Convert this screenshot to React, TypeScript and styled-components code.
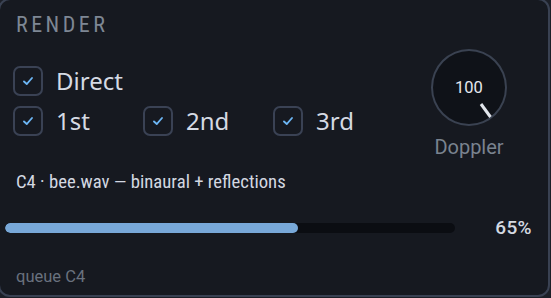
import React from "react";
import styled, { createGlobalStyle } from "styled-components";

const GlobalStyle = createGlobalStyle`
  html, body {
    margin: 0;
    padding: 0;
    background: #1c1f27;
  }
  body {
    overflow: hidden;
  }
`;

const Panel = styled.section`
  box-sizing: border-box;
  width: 552px;
  height: 299px;
  margin: -2px 0 0 -2px;
  padding: 14px 16px 0 5px;
  display: flex;
  flex-direction: column;
  border: 2px solid #394152;
  border-radius: 12px;
  background: #161920;
  font-family: Roboto, "Liberation Sans", sans-serif;
  overflow: hidden;
`;

const Title = styled.h2`
  margin: 0 0 0 11px;
  font-size: 22px;
  line-height: 22px;
  font-weight: 400;
  font-stretch: condensed;
  letter-spacing: 3.5px;
  color: #7e8794;
`;

const TopRow = styled.div`
  display: flex;
  justify-content: space-between;
  align-items: flex-start;
  margin-top: 13px;
  padding-right: 25px;
`;

const Options = styled.div`
  display: grid;
  grid-template-columns: repeat(3, 130px);
  row-gap: 10px;
  margin: 17px 0 0 8px;
`;

const Option = styled.label<{ $wide?: boolean }>`
  display: flex;
  align-items: center;
  gap: 13px;
  grid-column: ${(p) => (p.$wide ? "1 / -1" : "auto")};
`;

const Box = styled.span`
  box-sizing: border-box;
  width: 30px;
  height: 30px;
  display: flex;
  align-items: center;
  justify-content: center;
  border: 2px solid #3a4254;
  border-radius: 7px;
  color: #6cb6f4;
`;

const OptionText = styled.span`
  font-family: "Noto Sans", "Open Sans", sans-serif;
  font-size: 24px;
  line-height: 30px;
  color: #d5dae3;
`;

const KnobCol = styled.div`
  display: flex;
  flex-direction: column;
  align-items: center;
  width: 76px;
`;

const Knob = styled.div`
  position: relative;
  box-sizing: border-box;
  width: 76px;
  height: 77px;
  display: flex;
  align-items: center;
  justify-content: center;
  border: 2px solid #3a4251;
  border-radius: 50%;
  background: #0f1218;
`;

const KnobValue = styled.span`
  font-size: 16.5px;
  line-height: 20px;
  color: #e4e8ee;
`;

const Needle = styled.svg`
  position: absolute;
  inset: -2px;
  width: 76px;
  height: 77px;
`;

const KnobLabel = styled.span`
  margin-top: 9px;
  font-size: 20px;
  line-height: 24px;
  color: #7a838f;
`;

const Status = styled.div`
  margin: 12px 0 0 11px;
  font-size: 18.7px;
  line-height: 22px;
  font-stretch: condensed;
  color: #d3d8e1;
`;

const ProgressRow = styled.div`
  display: flex;
  align-items: center;
  height: 22px;
  margin-top: 24px;
`;

const Track = styled.div`
  width: 450px;
  height: 10px;
  border-radius: 5px;
  background: #0b0d12;
  overflow: hidden;
`;

const Fill = styled.div`
  height: 100%;
  border-radius: 5px;
  background: #78a8d8;
`;

const Percent = styled.span`
  flex: 1;
  text-align: right;
  font-size: 19px;
  line-height: 22px;
  font-weight: 500;
  letter-spacing: 0.4px;
  color: #d4d9e1;
`;

const Queue = styled.div`
  margin: 28px 0 0 11px;
  font-size: 16.5px;
  line-height: 20px;
  color: #69717e;
`;

const Check = () => (
  <svg width="12" height="12" viewBox="0 0 12 12">
    <polyline
      points="2,6.5 4.8,9 10,3"
      fill="none"
      stroke="currentColor"
      strokeWidth="1.9"
      strokeLinecap="round"
      strokeLinejoin="round"
    />
  </svg>
);

const CheckOption = ({ label, wide }: { label: string; wide?: boolean }) => (
  <Option $wide={wide}>
    <Box>
      <Check />
    </Box>
    <OptionText>{label}</OptionText>
  </Option>
);

const progress = 65;

const App = () => {
  return (
    <>
      <GlobalStyle />
      <Panel>
        <Title>RENDER</Title>
        <TopRow>
          <Options>
            <CheckOption label="Direct" wide />
            <CheckOption label="1st" />
            <CheckOption label="2nd" />
            <CheckOption label="3rd" />
          </Options>
          <KnobCol>
            <Knob>
              <KnobValue>100</KnobValue>
              <Needle viewBox="0 0 76 77">
                <line x1="50" y1="55" x2="59.5" y2="68" stroke="#e2e6ec" strokeWidth="3" />
              </Needle>
            </Knob>
            <KnobLabel>Doppler</KnobLabel>
          </KnobCol>
        </TopRow>
        <Status>C4 · bee.wav — binaural + reflections</Status>
        <ProgressRow>
          <Track>
            <Fill style={{ width: `${progress}%` }} />
          </Track>
          <Percent>{progress}%</Percent>
        </ProgressRow>
        <Queue>queue C4</Queue>
      </Panel>
    </>
  );
};

export default App;
